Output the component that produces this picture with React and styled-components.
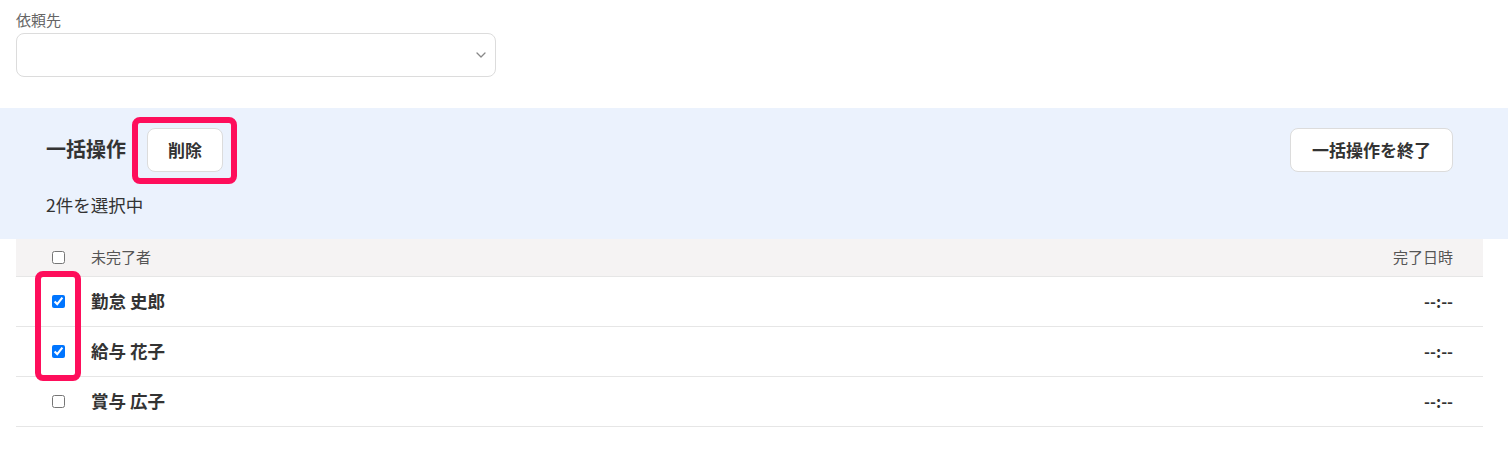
import React, { useState } from "react";
import styled, { createGlobalStyle } from "styled-components";

const Global = createGlobalStyle`
  html, body { margin: 0; padding: 0; background: #fff; }
  body { font-family: "Noto Sans CJK JP", "Noto Sans", sans-serif; color: #333; }
  * { box-sizing: border-box; }
`;

const Page = styled.div`
  padding-top: 10px;
  position: relative;
`;

const Field = styled.div`
  padding: 0 16px;
  width: 512px;
`;

const Label = styled.div`
  font-size: 15px;
  line-height: 20px;
  color: #666;
`;

const SelectBox = styled.div`
  margin-top: 3px;
  height: 44px;
  width: 480px;
  border: 1px solid #dcdcdc;
  border-radius: 8px;
  display: flex;
  align-items: center;
  justify-content: flex-end;
  padding-right: 9px;
  background: #fff;
`;

const Panel = styled.div`
  margin-top: 31px;
  background: #ebf2fd;
  padding: 20px 55px 20px 46px;
`;

const PanelTop = styled.div`
  display: flex;
  align-items: center;
  justify-content: space-between;
  height: 44px;
`;

const Group = styled.div`
  display: flex;
  align-items: center;
  gap: 21px;
`;

const Title = styled.div`
  font-size: 20px;
  font-weight: 700;
  color: #333;
  padding-bottom: 3px;
`;

const Button = styled.button`
  height: 44px;
  padding: 0 ${(p) => p.$pad}px 2px;
  background: #fff;
  border: 1px solid #dcdcdc;
  border-radius: 8px;
  font-family: inherit;
  font-size: 17px;
  font-weight: 700;
  color: #333;
  cursor: pointer;
`;

const Anchor = styled.div`
  position: relative;
  display: flex;
`;

const Highlight = styled.div`
  position: absolute;
  border: 6px solid #fe0e5b;
  border-radius: 8px;
  pointer-events: none;
`;

const Count = styled.div`
  margin-top: 21px;
  margin-bottom: 2px;
  font-size: 17.5px;
  line-height: 24px;
  color: #333;
`;

const Table = styled.div`
  margin: 0 25px 0 16px;
  position: relative;
`;

const Row = styled.div`
  display: flex;
  align-items: center;
  height: ${(p) => (p.$head ? 38 : 50)}px;
  background: ${(p) => (p.$head ? "#f5f3f3" : "#fff")};
  border-bottom: 1px solid #e6e6e6;
  padding: 0 30px 0 36px;
`;

const Check = styled.input`
  margin: 0;
  width: 13px;
  height: 13px;
  flex: none;
`;

const Name = styled.div`
  flex: 1;
  margin-left: 26px;
  padding-bottom: 2px;
  font-size: ${(p) => (p.$head ? 15 : 17.5)}px;
  font-weight: ${(p) => (p.$head ? 400 : 700)};
  color: ${(p) => (p.$head ? "#555" : "#333")};
`;

const Time = styled.div`
  padding-bottom: 2px;
  font-size: ${(p) => (p.$head ? 15 : 16)}px;
  font-weight: ${(p) => (p.$head ? 400 : 700)};
  color: ${(p) => (p.$head ? "#555" : "#333")};
`;

const Chevron = () => (
  <svg width="10" height="6" viewBox="0 0 10 6" fill="none">
    <path d="M1 1l4 4 4-4" stroke="#888" strokeWidth="1.3" strokeLinecap="round" strokeLinejoin="round" />
  </svg>
);

const people = [
  { name: "勤怠 史郎", checked: true },
  { name: "給与 花子", checked: true },
  { name: "賞与 広子", checked: false },
];

export default function App() {
  const [rows, setRows] = useState(people);
  const toggle = (i) =>
    setRows((r) => r.map((x, j) => (j === i ? { ...x, checked: !x.checked } : x)));
  return (
    <Page>
      <Global />
      <Field>
        <Label>依頼先</Label>
        <SelectBox>
          <Chevron />
        </SelectBox>
      </Field>
      <Panel>
        <PanelTop>
          <Group>
            <Title>一括操作</Title>
            <Anchor>
              <Button $pad={20}>削除</Button>
              <Highlight style={{ left: -15, top: -11, right: -14, bottom: -12 }} />
            </Anchor>
          </Group>
          <Button $pad={21}>一括操作を終了</Button>
        </PanelTop>
        <Count>2件を選択中</Count>
      </Panel>
      <Table>
        <Row $head>
          <Check type="checkbox" readOnly />
          <Name $head>未完了者</Name>
          <Time $head>完了日時</Time>
        </Row>
        {rows.map((r, i) => (
          <Row key={r.name}>
            <Check type="checkbox" checked={r.checked} onChange={() => toggle(i)} />
            <Name>{r.name}</Name>
            <Time>--:--</Time>
          </Row>
        ))}
        <Highlight style={{ left: 19, top: 32, width: 46, height: 110 }} />
      </Table>
    </Page>
  );
}
